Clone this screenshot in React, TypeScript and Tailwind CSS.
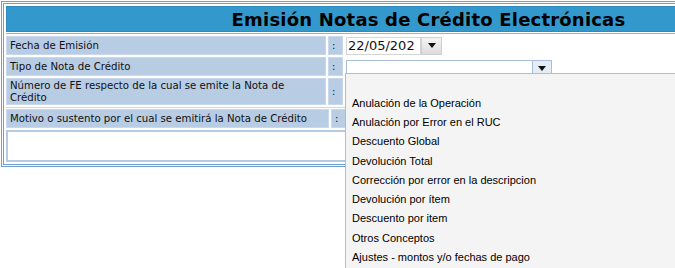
import React from "react";

const opciones = [
  "",
  "Anulación de la Operación",
  "Anulación por Error en el RUC",
  "Descuento Global",
  "Devolución Total",
  "Corrección por error en la descripcion",
  "Devolución por ítem",
  "Descuento por item",
  "Otros Conceptos",
  "Ajustes - montos y/o fechas de pago",
];

const Arrow = () => (
  <svg width="8" height="5" viewBox="0 0 8 5">
    <polygon points="0,0 8,0 4,5" fill="#111" />
  </svg>
);

const Label = ({ children, h = "h-[19px]" }: { children: React.ReactNode; h?: string }) => (
  <div className={`${h} flex items-center bg-[#b8cce4] border border-[#c9d8ec] px-[3px] leading-[12px]`}>
    {children}
  </div>
);

export default function App() {
  return (
    <div className="relative w-[675px] h-[268px] overflow-hidden bg-white text-[11.3px] text-[#111] [font-family:'DejaVu_Sans_Condensed','DejaVu_Sans',sans-serif]">
      {/* outer frame */}
      <div className="mt-px ml-px w-[855px] border-[3px] border-double border-[#6e9fd3] p-[2px]">
        {/* title bar */}
        <div className="h-[26px] flex items-center justify-center bg-[#3399cc] border border-[#2d8ac0]">
          <h1 className="text-[18px] font-bold text-black tracking-[0.2px] [font-family:'DejaVu_Sans',sans-serif]">
            Emisión Notas de Crédito Electrónicas
          </h1>
        </div>
        <div className="h-[2px] border-b border-[#8fb3dd]" />

        {/* first block */}
        <div className="mt-[2px] grid grid-cols-[320px_15px_1fr] gap-x-[2px] gap-y-[2px]">
          <Label>Fecha de Emisión</Label>
          <Label>:</Label>
          <div className="h-[19px] flex items-center">
            <div className="flex h-[18px] ml-[1px]">
              <div className="w-[75px] border border-[#d5d5d5] bg-white overflow-hidden whitespace-nowrap text-[13px] leading-[16px] pl-px [font-family:'DejaVu_Sans',sans-serif]">
                22/05/202
              </div>
              <div className="w-[21px] flex items-center justify-center bg-gradient-to-b from-[#f4f4f4] to-[#dcdcdc] border border-[#cfcfcf]">
                <Arrow />
              </div>
            </div>
          </div>

          <Label>Tipo de Nota de Crédito</Label>
          <Label>:</Label>
          <div className="h-[19px] flex items-end">
            <div className="flex h-[16px] ml-[1px] w-[206px] border border-[#a9bfd9] bg-white">
              <div className="flex-1" />
              <div className="w-[19px] flex items-center justify-center bg-[#e4ecf6] border-l border-[#a9bfd9]">
                <Arrow />
              </div>
            </div>
          </div>

          <Label h="h-[27px]">
            <span className="max-w-[300px]">Número de FE respecto de la cual se emite la Nota de Crédito</span>
          </Label>
          <Label h="h-[27px]">:</Label>
          <div />
        </div>

        {/* second block */}
        <div className="mt-[2px] border-t border-[#c9d8ec] pt-[1px] grid grid-cols-[323px_15px_1fr] gap-x-[2px]">
          <Label>Motivo o sustento por el cual se emitirá la Nota de Crédito</Label>
          <Label>:</Label>
          <div />
        </div>

        {/* empty box */}
        <div className="mt-[2px] h-[32px] border-2 border-[#b4cbe6]" />
      </div>

      {/* open dropdown list */}
      <div className="absolute left-[345px] top-[73px] w-[340px] h-[200px] bg-[#f4f4f4] border border-[#a9bfd9] [font-family:'Liberation_Sans',Arial,sans-serif] text-[11px] text-black">
        {opciones.map((o, i) => (
          <div key={i} className="h-[19.3px] flex items-center pl-[6px]">
            {o}
          </div>
        ))}
      </div>
    </div>
  );
}
